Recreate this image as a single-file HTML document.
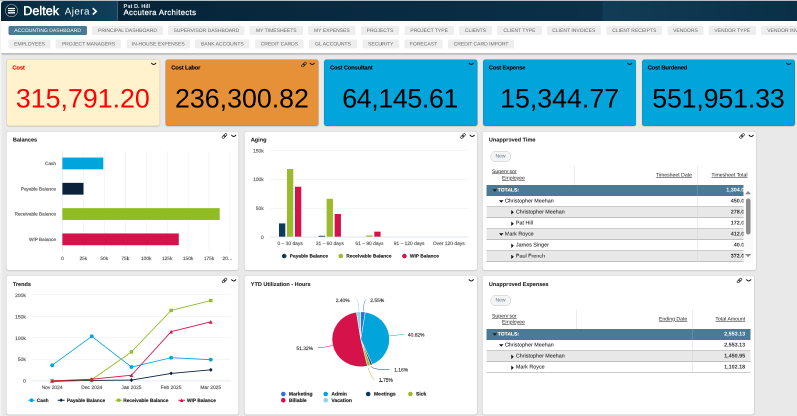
<!DOCTYPE html>
<html lang="en"><head><meta charset="utf-8"><title>Deltek Ajera - Accounting Dashboard</title>
<meta name="viewport" content="width=797, initial-scale=1">
<style>
html,body{margin:0;padding:0;background:#e9e9e9;}
body{width:797px;height:416px;overflow:hidden;position:relative;font-family:"Liberation Sans",Arial,sans-serif;}
#w{position:absolute;left:0;top:0;width:1594px;height:832px;transform:scale(.5);transform-origin:0 0;will-change:transform;background:#e9e9e9;overflow:hidden;}
#w *{box-sizing:border-box;}
#w{text-rendering:geometricPrecision;}
.abs{position:absolute;}
#hdr{position:absolute;left:2px;top:2px;width:1592px;height:40.4px;border-radius:6px 0 0 0;
 background:linear-gradient(90deg,#05263b 0,#10405a 232px,#3a5f76 232px,#3a5f76 233.6px,#062438 233.6px,#0b3048 1202px,#123c55 1204px,#0a2f47 1592px);}
#hdr .t{position:absolute;color:#fff;white-space:nowrap;line-height:1;}
#nav{position:absolute;left:2px;top:41.6px;width:1592px;height:64.4px;background:#fff;}
#navsh{position:absolute;left:2.6px;top:106px;width:1592px;height:5px;background:linear-gradient(#b9b9b9,#c6c6c6 60%,#e9e9e9);}
.nb{position:absolute;height:18px;border-radius:3px;background:#eee;color:#666;font-size:10px;line-height:19.4px;text-align:center;white-space:nowrap;overflow:hidden;}
.nb.on{background:#4b7a95;color:#fff;}
.kpi{position:absolute;top:119.4px;width:306.4px;height:132.2px;border-radius:5px;border:1px solid rgba(0,0,0,.13);box-shadow:0 1px 2px rgba(0,0,0,.2);}
.kpi .h{position:absolute;left:10.6px;top:8.5px;font-size:11.6px;letter-spacing:-.3px;font-weight:700;-webkit-text-stroke:.2px;line-height:14px;white-space:nowrap;}
.kpi .v{position:absolute;left:0;right:0;top:47.6px;text-align:center;font-size:53.5px;line-height:60px;white-space:nowrap;}
.pn{position:absolute;background:#fff;border:1px solid #cdcdcd;border-radius:6px;box-shadow:0 1px 2px rgba(0,0,0,.12);overflow:hidden;}
.pn .h{position:absolute;left:12.6px;top:10.6px;font-size:11.05px;font-weight:700;color:#2a2a2a;-webkit-text-stroke:.2px;line-height:14px;white-space:nowrap;}
svg{position:absolute;left:0;top:0;overflow:visible;}
svg text{font-family:"Liberation Sans",Arial,sans-serif;}
.ic{position:absolute;}
.newb{position:absolute;width:41px;height:22px;border-radius:11px;border:1px solid #c6c6c6;background:#f4f4f4;color:#4b7a95;font-size:10px;line-height:20px;text-align:center;}
.tb{position:absolute;font-size:10.8px;color:#333;}
.tb .r{position:absolute;left:0;right:0;height:22.1px;border-bottom:1.6px solid #979797;}
.tb .r.g{background:#e8e8e8;}
.tb .r.tot{background:#4b7a95;color:#fff;font-weight:700;border-bottom:none;}
.tb .r.tot .c{font-size:10px;}
.tb .c{position:absolute;top:0;line-height:21px;white-space:nowrap;-webkit-text-stroke:.2px;}
.tb .n{position:absolute;top:0;line-height:21px;white-space:nowrap;font-weight:700;text-align:right;}
.tb .hd{position:absolute;font-size:10.3px;text-decoration:underline;color:#222;white-space:nowrap;line-height:12px;}
.tb .vs{position:absolute;width:1px;background:#d9d9d9;}
.ar{position:absolute;width:0;height:0;}
</style></head>
<body>
<div id="w">
<div class="abs" style="left:0;top:0;width:2.6px;height:832px;background:#f3f3f3"></div><div class="abs" style="left:0;top:0;width:1594px;height:2px;background:#b8bfc4"></div>
<div id="hdr">
<svg width="240" height="39" viewBox="0 0 240 39"><circle cx="21" cy="19.2" r="12.2" fill="none" stroke="#b9c4cc" stroke-width="1.1"/><rect x="14" y="13.8" width="14" height="2.4" fill="#fff"/><rect x="14" y="17.9" width="14" height="2.4" fill="#fff"/><rect x="14" y="22" width="14" height="3.2" fill="#e3e7ea"/><path d="M183.5 14.4 L190.6 20.7 L183.5 27" fill="none" stroke="#fff" stroke-width="3.2"/></svg>
<div class="t" style="left:44.6px;top:7.6px;font-size:25px;font-weight:400;-webkit-text-stroke:.95px #fff;letter-spacing:.1px">Deltek</div>
<div class="t" style="left:118px;top:24px;font-size:6px;color:#c9d2d8">.</div>
<div class="t" style="left:127.5px;top:12.4px;font-size:19.6px;letter-spacing:.9px">Ajera</div>
<div class="t" style="left:245px;top:6px;font-size:11.4px;font-weight:700;color:#e4e9ed">Pat D. Hill</div>
<div class="t" style="left:245px;top:16px;font-size:15.5px;font-weight:400;-webkit-text-stroke:.45px #fff;letter-spacing:.68px">Accutera Architects</div>
</div>
<div id="nav"></div><div id="navsh"></div>
<div class="nb on" style="left:17px;top:52px;width:156.6px">ACCOUNTING DASHBOARD</div>
<div class="nb" style="left:184.2px;top:52px;width:141.6px">PRINCIPAL DASHBOARD</div>
<div class="nb" style="left:336.2px;top:52px;width:153.2px">SUPERVISOR DASHBOARD</div>
<div class="nb" style="left:499.4px;top:52px;width:106.4px">MY TIMESHEETS</div>
<div class="nb" style="left:616.4px;top:52px;width:94.8px">MY EXPENSES</div>
<div class="nb" style="left:721.8px;top:52px;width:76.2px">PROJECTS</div>
<div class="nb" style="left:808.6px;top:52px;width:99.4px">PROJECT TYPE</div>
<div class="nb" style="left:918.4px;top:52px;width:65.2px">CLIENTS</div>
<div class="nb" style="left:994.2px;top:52px;width:89.4px">CLIENT TYPE</div>
<div class="nb" style="left:1093.6px;top:52px;width:108px">CLIENT INVOICES</div>
<div class="nb" style="left:1213px;top:52px;width:111px">CLIENT RECEIPTS</div>
<div class="nb" style="left:1334.6px;top:52px;width:72.6px">VENDORS</div>
<div class="nb" style="left:1417.4px;top:52px;width:94.2px">VENDOR TYPE</div>
<div class="nb" style="left:1522.2px;top:52px;width:117.8px">VENDOR INVOICES</div>
<div class="nb" style="left:17px;top:78.6px;width:84.4px">EMPLOYEES</div>
<div class="nb" style="left:111.4px;top:78.6px;width:131px">PROJECT MANAGERS</div>
<div class="nb" style="left:253.2px;top:78.6px;width:126.8px">IN-HOUSE EXPENSES</div>
<div class="nb" style="left:390px;top:78.6px;width:109.4px">BANK ACCOUNTS</div>
<div class="nb" style="left:510.4px;top:78.6px;width:96.8px">CREDIT CARDS</div>
<div class="nb" style="left:618.4px;top:78.6px;width:95.2px">GL ACCOUNTS</div>
<div class="nb" style="left:724.8px;top:78.6px;width:73.2px">SECURITY</div>
<div class="nb" style="left:808.6px;top:78.6px;width:76.8px">FORECAST</div>
<div class="nb" style="left:896.4px;top:78.6px;width:131.4px">CREDIT CARD IMPORT</div>
<div class="kpi" style="left:13.2px;background:#fff2cc;color:#ff0000"><div class="h">Cost</div><div class="v" style="left:-1.4px">315,791.20</div>
<svg class="ic" style="left:287.4px;top:4.9px" width="11" height="6" viewBox="0 0 11 6"><path d="M1.2 1.3 Q5.4 6.9 9.6 1.3" fill="none" stroke="#111" stroke-width="2" stroke-linecap="round"/></svg>
</div>
<div class="kpi" style="left:330.8px;background:#e69138;color:#000"><div class="h">Cost Labor</div><div class="v">236,300.82</div>
<svg class="ic" style="left:269.4px;top:1.2px" width="14" height="14" viewBox="0 0 14 14"><g transform="rotate(-45 7 7)" fill="none" stroke="#222" stroke-width="1.3"><rect x="1.2" y="4.9" width="6.9" height="4.2" rx="2.1"/><rect x="5.9" y="4.9" width="6.9" height="4.2" rx="2.1"/></g></svg>
<svg class="ic" style="left:287.4px;top:4.9px" width="11" height="6" viewBox="0 0 11 6"><path d="M1.2 1.3 Q5.4 6.9 9.6 1.3" fill="none" stroke="#111" stroke-width="2" stroke-linecap="round"/></svg>
</div>
<div class="kpi" style="left:648.4px;background:#01a5db;color:#000"><div class="h">Cost Consultant</div><div class="v" style="letter-spacing:-.7px;left:-2.6px">64,145.61</div>
<svg class="ic" style="left:287.4px;top:4.9px" width="11" height="6" viewBox="0 0 11 6"><path d="M1.2 1.3 Q5.4 6.9 9.6 1.3" fill="none" stroke="#111" stroke-width="2" stroke-linecap="round"/></svg>
</div>
<div class="kpi" style="left:966px;background:#01a5db;color:#000"><div class="h">Cost Expense</div><div class="v">15,344.77</div>
<svg class="ic" style="left:287.4px;top:4.9px" width="11" height="6" viewBox="0 0 11 6"><path d="M1.2 1.3 Q5.4 6.9 9.6 1.3" fill="none" stroke="#111" stroke-width="2" stroke-linecap="round"/></svg>
</div>
<div class="kpi" style="left:1283.6px;background:#01a5db;color:#000"><div class="h">Cost Burdened</div><div class="v" style="letter-spacing:-.32px">551,951.33</div>
<svg class="ic" style="left:287.4px;top:4.9px" width="11" height="6" viewBox="0 0 11 6"><path d="M1.2 1.3 Q5.4 6.9 9.6 1.3" fill="none" stroke="#111" stroke-width="2" stroke-linecap="round"/></svg>
</div>
<div class="pn" style="left:12.1px;top:261.8px;width:466.4px;height:279.3px"><div class="h">Balances</div><svg class="ic" style="left:428.9px;top:2.2px" width="14" height="14" viewBox="0 0 14 14"><g transform="rotate(-45 7 7)" fill="none" stroke="#222" stroke-width="1.3"><rect x="1.2" y="4.9" width="6.9" height="4.2" rx="2.1"/><rect x="5.9" y="4.9" width="6.9" height="4.2" rx="2.1"/></g></svg><svg class="ic" style="left:449.2px;top:6.3px" width="11" height="6" viewBox="0 0 11 6"><path d="M1.2 1.3 Q5.4 6.9 9.6 1.3" fill="none" stroke="#111" stroke-width="2" stroke-linecap="round"/></svg><svg style="left:-13.1px;top:-262.8px" width="1594" height="832" viewBox="0 0 1594 832"><path d="M124.8 301.6 V504" stroke="#d3dbea" stroke-width="1"/><path d="M166.7 301.6 V504" stroke="#ebebeb" stroke-width="1"/><path d="M208.6 301.6 V504" stroke="#ebebeb" stroke-width="1"/><path d="M250.5 301.6 V504" stroke="#ebebeb" stroke-width="1"/><path d="M292.4 301.6 V504" stroke="#ebebeb" stroke-width="1"/><path d="M334.3 301.6 V504" stroke="#ebebeb" stroke-width="1"/><path d="M376.2 301.6 V504" stroke="#ebebeb" stroke-width="1"/><path d="M418.1 301.6 V504" stroke="#ebebeb" stroke-width="1"/><path d="M460 301.6 V504" stroke="#ebebeb" stroke-width="1"/><text x="124.8" y="519.5" font-size="9.6" fill="#555" stroke="#555" stroke-width=".3" text-anchor="middle" font-weight="400">0</text><text x="166.7" y="519.5" font-size="9.6" fill="#555" stroke="#555" stroke-width=".3" text-anchor="middle" font-weight="400">25k</text><text x="208.6" y="519.5" font-size="9.6" fill="#555" stroke="#555" stroke-width=".3" text-anchor="middle" font-weight="400">50k</text><text x="250.5" y="519.5" font-size="9.6" fill="#555" stroke="#555" stroke-width=".3" text-anchor="middle" font-weight="400">75k</text><text x="292.4" y="519.5" font-size="9.6" fill="#555" stroke="#555" stroke-width=".3" text-anchor="middle" font-weight="400">100k</text><text x="334.3" y="519.5" font-size="9.6" fill="#555" stroke="#555" stroke-width=".3" text-anchor="middle" font-weight="400">125k</text><text x="376.2" y="519.5" font-size="9.6" fill="#555" stroke="#555" stroke-width=".3" text-anchor="middle" font-weight="400">150k</text><text x="418.1" y="519.5" font-size="9.6" fill="#555" stroke="#555" stroke-width=".3" text-anchor="middle" font-weight="400">175k</text><text x="455" y="519.5" font-size="9.6" fill="#555" stroke="#555" stroke-width=".3" text-anchor="middle" font-weight="400">20…</text><rect x="124.8" y="315.1" width="81.79" height="23.6" fill="#01a5db"/><text x="112" y="330.2" font-size="9.4" fill="#555" stroke="#555" stroke-width=".3" text-anchor="end" font-weight="400">Cash</text><rect x="124.8" y="365.7" width="42.24" height="23.6" fill="#0c223a"/><text x="112" y="380.8" font-size="9.4" fill="#555" stroke="#555" stroke-width=".3" text-anchor="end" font-weight="400">Payable Balance</text><rect x="124.8" y="416.3" width="314.59" height="23.6" fill="#8fbc21"/><text x="112" y="431.4" font-size="9.4" fill="#555" stroke="#555" stroke-width=".3" text-anchor="end" font-weight="400">Receivable Balance</text><rect x="124.8" y="466.9" width="232.8" height="23.6" fill="#d5124a"/><text x="112" y="482" font-size="9.4" fill="#555" stroke="#555" stroke-width=".3" text-anchor="end" font-weight="400">WIP Balance</text></svg></div>
<div class="pn" style="left:488px;top:261.8px;width:467.2px;height:279.3px"><div class="h">Aging</div><svg class="ic" style="left:429.7px;top:2.2px" width="14" height="14" viewBox="0 0 14 14"><g transform="rotate(-45 7 7)" fill="none" stroke="#222" stroke-width="1.3"><rect x="1.2" y="4.9" width="6.9" height="4.2" rx="2.1"/><rect x="5.9" y="4.9" width="6.9" height="4.2" rx="2.1"/></g></svg><svg class="ic" style="left:450px;top:6.3px" width="11" height="6" viewBox="0 0 11 6"><path d="M1.2 1.3 Q5.4 6.9 9.6 1.3" fill="none" stroke="#111" stroke-width="2" stroke-linecap="round"/></svg><svg style="left:-489px;top:-262.8px" width="1594" height="832" viewBox="0 0 1594 832"><text x="527.4" y="477.5" font-size="9.8" fill="#555" stroke="#555" stroke-width=".3" text-anchor="end" font-weight="400">0</text><path d="M540.6 416.4 H937.2" stroke="#ebebeb" stroke-width="1"/><text x="527.4" y="419.9" font-size="9.8" fill="#555" stroke="#555" stroke-width=".3" text-anchor="end" font-weight="400">50k</text><path d="M540.6 358.8 H937.2" stroke="#ebebeb" stroke-width="1"/><text x="527.4" y="362.3" font-size="9.8" fill="#555" stroke="#555" stroke-width=".3" text-anchor="end" font-weight="400">100k</text><path d="M540.6 301.2 H937.2" stroke="#ebebeb" stroke-width="1"/><text x="527.4" y="304.7" font-size="9.8" fill="#555" stroke="#555" stroke-width=".3" text-anchor="end" font-weight="400">150k</text><text x="580.26" y="489.5" font-size="9.8" fill="#555" stroke="#555" stroke-width=".3" text-anchor="middle" font-weight="400">0 – 30 days</text><rect x="557.96" y="446.81" width="12.6" height="27.19" fill="#0e3a5e"/><rect x="573.96" y="338.06" width="12.6" height="135.94" fill="#9bbb2c"/><rect x="589.96" y="373.43" width="12.6" height="100.57" fill="#d5124a"/><text x="659.58" y="489.5" font-size="9.8" fill="#555" stroke="#555" stroke-width=".3" text-anchor="middle" font-weight="400">31 – 60 days</text><rect x="637.28" y="471.58" width="12.6" height="2.42" fill="#0e3a5e"/><rect x="653.28" y="397.51" width="12.6" height="76.49" fill="#9bbb2c"/><rect x="669.28" y="427.92" width="12.6" height="46.08" fill="#d5124a"/><text x="738.9" y="489.5" font-size="9.8" fill="#555" stroke="#555" stroke-width=".3" text-anchor="middle" font-weight="400">61 – 90 days</text><rect x="732.6" y="470.89" width="12.6" height="3.11" fill="#9bbb2c"/><rect x="748.6" y="463.29" width="12.6" height="10.71" fill="#d5124a"/><text x="818.22" y="489.5" font-size="9.8" fill="#555" stroke="#555" stroke-width=".3" text-anchor="middle" font-weight="400">91 – 120 days</text><text x="897.54" y="489.5" font-size="9.8" fill="#555" stroke="#555" stroke-width=".3" text-anchor="middle" font-weight="400">Over 120 days</text><path d="M540.6 474 H937.2" stroke="#d3dbea" stroke-width="1.3"/><circle cx="568.4" cy="512" r="4.6" fill="#0e3a5e"/><text x="579.6" y="515.4" font-size="9.7" fill="#262626" stroke="#262626" stroke-width=".3" text-anchor="start" font-weight="700">Payable Balance</text><circle cx="681.6" cy="512" r="4.6" fill="#9bbb2c"/><text x="692.6" y="515.4" font-size="9.7" fill="#262626" stroke="#262626" stroke-width=".3" text-anchor="start" font-weight="700">Receivable Balance</text><circle cx="808.8" cy="512" r="4.6" fill="#d5124a"/><text x="819.8" y="515.4" font-size="9.7" fill="#262626" stroke="#262626" stroke-width=".3" text-anchor="start" font-weight="700">WIP Balance</text></svg></div>
<div class="pn" style="left:964.2px;top:261.8px;width:549px;height:279.3px"><div class="h">Unapproved Time</div><svg class="ic" style="left:511.5px;top:2.2px" width="14" height="14" viewBox="0 0 14 14"><g transform="rotate(-45 7 7)" fill="none" stroke="#222" stroke-width="1.3"><rect x="1.2" y="4.9" width="6.9" height="4.2" rx="2.1"/><rect x="5.9" y="4.9" width="6.9" height="4.2" rx="2.1"/></g></svg><svg class="ic" style="left:531.8px;top:6.3px" width="11" height="6" viewBox="0 0 11 6"><path d="M1.2 1.3 Q5.4 6.9 9.6 1.3" fill="none" stroke="#111" stroke-width="2" stroke-linecap="round"/></svg><div class="newb" style="left:15.4px;top:38.8px">New</div><div class="tb" style="left:8.2px;top:0;width:513.4px;height:600px;"><div class="hd" style="left:10.6px;top:75.6px">Supervisor</div><div class="hd" style="left:30.6px;top:88px">Employee</div><div class="hd" style="right:102.8px;top:81.8px">Timesheet Date</div><div class="hd" style="right:-8.2px;top:81.8px">Timesheet Total</div><div class="vs" style="left:175.6px;top:68.2px;height:38.8px"></div><div class="vs" style="left:421.6px;top:68.2px;height:193.5px"></div><div class="r tot" style="top:107px"><svg class="ic" style="left:11.3px;top:8px" width="9" height="6" viewBox="0 0 9 6"><path d="M0 0.5 H9 L4.5 5.5 Z" fill="#0b1f2b"/></svg><div class="c" style="left:22.2px">TOTALS:</div><div class="n" style="right:-7.8px">1,304.00</div><div class="vs" style="left:421.6px;top:0;height:22px;background:#7d9fb3"></div></div><div class="r " style="top:129.1px"><svg class="ic" style="left:24.9px;top:8px" width="9" height="6" viewBox="0 0 9 6"><path d="M0 0.5 H9 L4.5 5.5 Z" fill="#111"/></svg><div class="c" style="left:36.4px">Christopher Meehan</div><div class="n" style="right:-7.8px">450.00</div><div class="vs" style="left:421.6px;top:0;height:22px;background:#d4d4d4"></div></div><div class="r g" style="top:151.2px"><svg class="ic" style="left:48.8px;top:6.5px" width="6" height="9" viewBox="0 0 6 9"><path d="M0.5 0 V9 L5.5 4.5 Z" fill="#111"/></svg><div class="c" style="left:58.4px">Christopher Meehan</div><div class="n" style="right:-7.8px">278.00</div><div class="vs" style="left:421.6px;top:0;height:22px;background:#d4d4d4"></div></div><div class="r " style="top:173.3px"><svg class="ic" style="left:48.8px;top:6.5px" width="6" height="9" viewBox="0 0 6 9"><path d="M0.5 0 V9 L5.5 4.5 Z" fill="#111"/></svg><div class="c" style="left:58.4px">Pat Hill</div><div class="n" style="right:-7.8px">172.00</div><div class="vs" style="left:421.6px;top:0;height:22px;background:#d4d4d4"></div></div><div class="r g" style="top:195.4px"><svg class="ic" style="left:24.9px;top:8px" width="9" height="6" viewBox="0 0 9 6"><path d="M0 0.5 H9 L4.5 5.5 Z" fill="#111"/></svg><div class="c" style="left:36.4px">Mark Royce</div><div class="n" style="right:-7.8px">412.00</div><div class="vs" style="left:421.6px;top:0;height:22px;background:#d4d4d4"></div></div><div class="r " style="top:217.5px"><svg class="ic" style="left:48.8px;top:6.5px" width="6" height="9" viewBox="0 0 6 9"><path d="M0.5 0 V9 L5.5 4.5 Z" fill="#111"/></svg><div class="c" style="left:58.4px">James Singer</div><div class="n" style="right:-7.8px">40.00</div><div class="vs" style="left:421.6px;top:0;height:22px;background:#d4d4d4"></div></div><div class="r g" style="top:239.6px"><svg class="ic" style="left:48.8px;top:6.5px" width="6" height="9" viewBox="0 0 6 9"><path d="M0.5 0 V9 L5.5 4.5 Z" fill="#111"/></svg><div class="c" style="left:58.4px">Paul French</div><div class="n" style="right:-7.8px">372.00</div><div class="vs" style="left:421.6px;top:0;height:22px;background:#d4d4d4"></div></div></div><div class="abs" style="left:521.6px;top:107px;width:19px;height:156.7px;background:#fafafa"></div><svg class="ic" style="left:524.8px;top:118.8px" width="12.4" height="6.4" viewBox="0 0 11 6"><path d="M0 6 H11 L5.5 0 Z" fill="#8a8a8a"/></svg><div class="abs" style="left:526.6px;top:134px;width:9.6px;height:72px;background:#8c8c8c;border-radius:4.8px"></div><svg class="ic" style="left:524.8px;top:245.4px" width="12.4" height="6.4" viewBox="0 0 11 6"><path d="M0 0 H11 L5.5 6 Z" fill="#8a8a8a"/></svg></div>
<div class="pn" style="left:12.1px;top:550.4px;width:466.4px;height:279.2px"><div class="h">Trends</div><svg class="ic" style="left:428.9px;top:2.2px" width="14" height="14" viewBox="0 0 14 14"><g transform="rotate(-45 7 7)" fill="none" stroke="#222" stroke-width="1.3"><rect x="1.2" y="4.9" width="6.9" height="4.2" rx="2.1"/><rect x="5.9" y="4.9" width="6.9" height="4.2" rx="2.1"/></g></svg><svg class="ic" style="left:449.2px;top:6.3px" width="11" height="6" viewBox="0 0 11 6"><path d="M1.2 1.3 Q5.4 6.9 9.6 1.3" fill="none" stroke="#111" stroke-width="2" stroke-linecap="round"/></svg><svg style="left:-13.1px;top:-551.4px" width="1594" height="832" viewBox="0 0 1594 832"><text x="51.6" y="765.3" font-size="9.8" fill="#555" stroke="#555" stroke-width=".3" text-anchor="end" font-weight="400">0</text><path d="M64.6 718.7 H461.2" stroke="#ebebeb" stroke-width="1"/><text x="51.6" y="722.45" font-size="9.8" fill="#555" stroke="#555" stroke-width=".3" text-anchor="end" font-weight="400">50k</text><path d="M64.6 675.6 H461.2" stroke="#ebebeb" stroke-width="1"/><text x="51.6" y="679.6" font-size="9.8" fill="#555" stroke="#555" stroke-width=".3" text-anchor="end" font-weight="400">100k</text><path d="M64.6 632.5 H461.2" stroke="#ebebeb" stroke-width="1"/><text x="51.6" y="636.75" font-size="9.8" fill="#555" stroke="#555" stroke-width=".3" text-anchor="end" font-weight="400">150k</text><path d="M64.6 589.4 H461.2" stroke="#ebebeb" stroke-width="1"/><text x="51.6" y="593.9" font-size="9.8" fill="#555" stroke="#555" stroke-width=".3" text-anchor="end" font-weight="400">200k</text><path d="M64.6 761.8 H461.2" stroke="#d3dbea" stroke-width="1.1"/><text x="104.26" y="777.5" font-size="9.8" fill="#555" stroke="#555" stroke-width=".3" text-anchor="middle" font-weight="400">Nov 2024</text><text x="183.58" y="777.5" font-size="9.8" fill="#555" stroke="#555" stroke-width=".3" text-anchor="middle" font-weight="400">Dec 2024</text><text x="262.9" y="777.5" font-size="9.8" fill="#555" stroke="#555" stroke-width=".3" text-anchor="middle" font-weight="400">Jan 2025</text><text x="342.22" y="777.5" font-size="9.8" fill="#555" stroke="#555" stroke-width=".3" text-anchor="middle" font-weight="400">Feb 2025</text><text x="421.54" y="777.5" font-size="9.8" fill="#555" stroke="#555" stroke-width=".3" text-anchor="middle" font-weight="400">Mar 2025</text><path d="M104.26 730.63 L183.58 672.61 L262.9 734.09 L342.22 715.47 L421.54 719.37" fill="none" stroke="#01a5db" stroke-width="1.7" stroke-linejoin="round"/><circle cx="104.26" cy="730.63" r="3.8" fill="#01a5db"/><circle cx="183.58" cy="672.61" r="3.8" fill="#01a5db"/><circle cx="262.9" cy="734.09" r="3.8" fill="#01a5db"/><circle cx="342.22" cy="715.47" r="3.8" fill="#01a5db"/><circle cx="421.54" cy="719.37" r="3.8" fill="#01a5db"/><path d="M104.26 761.8 L183.58 760.93 L262.9 760.07 L342.22 746.82 L421.54 739.63" fill="none" stroke="#0c2340" stroke-width="1.7" stroke-linejoin="round"/><path d="M104.26 758 L108.06 761.8 L104.26 765.6 L100.46 761.8 Z" fill="#0c2340"/><path d="M183.58 757.13 L187.38 760.93 L183.58 764.73 L179.78 760.93 Z" fill="#0c2340"/><path d="M262.9 756.27 L266.7 760.07 L262.9 763.87 L259.1 760.07 Z" fill="#0c2340"/><path d="M342.22 743.02 L346.02 746.82 L342.22 750.62 L338.42 746.82 Z" fill="#0c2340"/><path d="M421.54 735.83 L425.34 739.63 L421.54 743.43 L417.74 739.63 Z" fill="#0c2340"/><path d="M104.26 761.37 L183.58 759.2 L262.9 703.78 L342.22 620.91 L421.54 601.16" fill="none" stroke="#8fbc21" stroke-width="1.7" stroke-linejoin="round"/><rect x="100.86" y="757.97" width="6.8" height="6.8" fill="#8fbc21"/><rect x="180.18" y="755.8" width="6.8" height="6.8" fill="#8fbc21"/><rect x="259.5" y="700.38" width="6.8" height="6.8" fill="#8fbc21"/><rect x="338.82" y="617.51" width="6.8" height="6.8" fill="#8fbc21"/><rect x="418.14" y="597.76" width="6.8" height="6.8" fill="#8fbc21"/><path d="M104.26 761.8 L183.58 758.34 L262.9 750.54 L342.22 663.43 L421.54 643.68" fill="none" stroke="#d5124a" stroke-width="1.7" stroke-linejoin="round"/><path d="M104.26 758 L108.06 765.6 L100.46 765.6 Z" fill="#d5124a"/><path d="M183.58 754.54 L187.38 762.14 L179.78 762.14 Z" fill="#d5124a"/><path d="M262.9 746.74 L266.7 754.34 L259.1 754.34 Z" fill="#d5124a"/><path d="M342.22 659.63 L346.02 667.23 L338.42 667.23 Z" fill="#d5124a"/><path d="M421.54 639.88 L425.34 647.48 L417.74 647.48 Z" fill="#d5124a"/><path d="M56.6 800.4 H69.6" stroke="#01a5db" stroke-width="2"/><circle cx="63.1" cy="800.4" r="3.6" fill="#01a5db"/><text x="73.6" y="803.8" font-size="9.7" fill="#262626" stroke="#262626" stroke-width=".3" text-anchor="start" font-weight="700">Cash</text><path d="M115.4 800.4 H129.2" stroke="#0c2340" stroke-width="2"/><path d="M122.3 796.8 L125.9 800.4 L122.3 804 L118.7 800.4 Z" fill="#0c2340"/><text x="133.8" y="803.8" font-size="9.7" fill="#262626" stroke="#262626" stroke-width=".3" text-anchor="start" font-weight="700">Payable Balance</text><path d="M230.8 800.4 H244" stroke="#8fbc21" stroke-width="2"/><rect x="234.2" y="797.2" width="6.4" height="6.4" fill="#8fbc21"/><text x="246.4" y="803.8" font-size="9.7" fill="#262626" stroke="#262626" stroke-width=".3" text-anchor="start" font-weight="700">Receivable Balance</text><path d="M356.6 800.4 H370" stroke="#d5124a" stroke-width="2"/><path d="M363.3 796.8 L366.9 804 L359.7 804 Z" fill="#d5124a"/><text x="373.8" y="803.8" font-size="9.7" fill="#262626" stroke="#262626" stroke-width=".3" text-anchor="start" font-weight="700">WIP Balance</text></svg></div>
<div class="pn" style="left:488px;top:550.4px;width:467.2px;height:279.2px"><div class="h">YTD Utilization - Hours</div><svg class="ic" style="left:448.4px;top:6.3px" width="11" height="6" viewBox="0 0 11 6"><path d="M1.2 1.3 Q5.4 6.9 9.6 1.3" fill="none" stroke="#111" stroke-width="2" stroke-linecap="round"/></svg><svg style="left:-489px;top:-551.4px" width="1594" height="832" viewBox="0 0 1594 832"><path d="M721.5 678.6 L721.5 623.6 A57.5 55 0 0 1 730.67 624.3 Z" fill="#2b73e0" stroke="#fff" stroke-width="1" stroke-linejoin="round"/><path d="M721.5 678.6 L730.67 624.3 A57.5 55 0 0 1 744.77 728.9 Z" fill="#01a5db" stroke="#fff" stroke-width="1" stroke-linejoin="round"/><path d="M721.5 678.6 L744.77 728.9 A57.5 55 0 0 1 740.88 730.38 Z" fill="#0e3a5e" stroke="#fff" stroke-width="1" stroke-linejoin="round"/><path d="M721.5 678.6 L740.88 730.38 A57.5 55 0 0 1 734.82 732.1 Z" fill="#9bbb2c" stroke="#fff" stroke-width="1" stroke-linejoin="round"/><path d="M721.5 678.6 L734.82 732.1 A57.5 55 0 1 1 712.86 624.22 Z" fill="#d5124a" stroke="#fff" stroke-width="1" stroke-linejoin="round"/><path d="M721.5 678.6 L712.86 624.22 A57.5 55 0 0 1 721.5 623.6 Z" fill="#8ed4e8" stroke="#fff" stroke-width="1" stroke-linejoin="round"/><path d="M733 599.6 C729 599.6 727.2 608 726.6 622.4" fill="none" stroke="#2b73e0" stroke-width="1"/><path d="M712.4 599.6 C716 599.6 717.2 608 718 622.4" fill="none" stroke="#8ed4e8" stroke-width="1"/><path d="M808 669.2 C798 669.2 790 670.8 778.4 672" fill="none" stroke="#01a5db" stroke-width="1"/><path d="M636 695.6 C646 695.6 654 693.2 665.6 690.8" fill="none" stroke="#d5124a" stroke-width="1"/><path d="M779 739.2 C746 739.2 747 736 741.2 732.8" fill="none" stroke="#0e3a5e" stroke-width="1"/><path d="M749 758.8 C744 758.8 739 744 736 735.2" fill="none" stroke="#9bbb2c" stroke-width="1"/><text x="740.6" y="603.9" font-size="9.8" fill="#333" stroke="#333" stroke-width=".3" text-anchor="start" font-weight="400">2.55%</text><text x="699.2" y="603.9" font-size="9.8" fill="#333" stroke="#333" stroke-width=".3" text-anchor="end" font-weight="400">2.40%</text><text x="815.8" y="672.9" font-size="9.8" fill="#333" stroke="#333" stroke-width=".3" text-anchor="start" font-weight="400">40.82%</text><text x="626" y="699.9" font-size="9.8" fill="#333" stroke="#333" stroke-width=".3" text-anchor="end" font-weight="400">51.32%</text><text x="788.4" y="743.3" font-size="9.8" fill="#333" stroke="#333" stroke-width=".3" text-anchor="start" font-weight="400">1.16%</text><text x="758" y="762.9" font-size="9.8" fill="#333" stroke="#333" stroke-width=".3" text-anchor="start" font-weight="400">1.75%</text><circle cx="566.6" cy="788" r="4.6" fill="#2b73e0"/><text x="577.8" y="791.4" font-size="10" fill="#262626" stroke="#262626" stroke-width=".3" text-anchor="start" font-weight="700">Marketing</text><circle cx="651.4" cy="788" r="4.6" fill="#01a5db"/><text x="662.8" y="791.4" font-size="10" fill="#262626" stroke="#262626" stroke-width=".3" text-anchor="start" font-weight="700">Admin</text><circle cx="736.4" cy="788" r="4.6" fill="#0e3a5e"/><text x="748" y="791.4" font-size="10" fill="#262626" stroke="#262626" stroke-width=".3" text-anchor="start" font-weight="700">Meetings</text><circle cx="820.8" cy="788" r="4.6" fill="#9bbb2c"/><text x="832" y="791.4" font-size="10" fill="#262626" stroke="#262626" stroke-width=".3" text-anchor="start" font-weight="700">Sick</text><circle cx="566.6" cy="800.4" r="4.6" fill="#d5124a"/><text x="577.8" y="803.8" font-size="10" fill="#262626" stroke="#262626" stroke-width=".3" text-anchor="start" font-weight="700">Billable</text><circle cx="651.4" cy="800.4" r="4.6" fill="#8ed4e8"/><text x="662.8" y="803.8" font-size="10" fill="#262626" stroke="#262626" stroke-width=".3" text-anchor="start" font-weight="700">Vacation</text></svg></div>
<div class="pn" style="left:964.2px;top:550.4px;width:544.4px;height:279.2px"><div class="h">Unapproved Expenses</div><svg class="ic" style="left:506.9px;top:2.2px" width="14" height="14" viewBox="0 0 14 14"><g transform="rotate(-45 7 7)" fill="none" stroke="#222" stroke-width="1.3"><rect x="1.2" y="4.9" width="6.9" height="4.2" rx="2.1"/><rect x="5.9" y="4.9" width="6.9" height="4.2" rx="2.1"/></g></svg><svg class="ic" style="left:527.2px;top:6.3px" width="11" height="6" viewBox="0 0 11 6"><path d="M1.2 1.3 Q5.4 6.9 9.6 1.3" fill="none" stroke="#111" stroke-width="2" stroke-linecap="round"/></svg><div class="newb" style="left:15.4px;top:38.4px">New</div><div class="tb" style="left:8.2px;top:0;width:527.8px;height:600px;"><div class="hd" style="left:10.6px;top:75.2px">Supervisor</div><div class="hd" style="left:30.6px;top:87.6px">Employee</div><div class="hd" style="right:126.6px;top:81.4px">Ending Date</div><div class="hd" style="right:10.8px;top:81.4px">Total Amount</div><div class="vs" style="left:179.6px;top:67.8px;height:38.8px"></div><div class="vs" style="left:411.6px;top:67.8px;height:127.2px"></div><div class="r tot" style="top:106.6px"><svg class="ic" style="left:11.3px;top:8px" width="9" height="6" viewBox="0 0 9 6"><path d="M0 0.5 H9 L4.5 5.5 Z" fill="#0b1f2b"/></svg><div class="c" style="left:22.2px">TOTALS:</div><div class="n" style="right:10.8px">2,553.13</div><div class="vs" style="left:411.6px;top:0;height:22px;background:#7d9fb3"></div></div><div class="r " style="top:128.7px"><svg class="ic" style="left:24.9px;top:8px" width="9" height="6" viewBox="0 0 9 6"><path d="M0 0.5 H9 L4.5 5.5 Z" fill="#111"/></svg><div class="c" style="left:36.4px">Christopher Meehan</div><div class="n" style="right:10.8px">2,553.13</div><div class="vs" style="left:411.6px;top:0;height:22px;background:#d4d4d4"></div></div><div class="r g" style="top:150.8px"><svg class="ic" style="left:48.8px;top:6.5px" width="6" height="9" viewBox="0 0 6 9"><path d="M0.5 0 V9 L5.5 4.5 Z" fill="#111"/></svg><div class="c" style="left:58.4px">Christopher Meehan</div><div class="n" style="right:10.8px">1,450.95</div><div class="vs" style="left:411.6px;top:0;height:22px;background:#d4d4d4"></div></div><div class="r " style="top:172.9px"><svg class="ic" style="left:48.8px;top:6.5px" width="6" height="9" viewBox="0 0 6 9"><path d="M0.5 0 V9 L5.5 4.5 Z" fill="#111"/></svg><div class="c" style="left:58.4px">Mark Royce</div><div class="n" style="right:10.8px">1,102.18</div><div class="vs" style="left:411.6px;top:0;height:22px;background:#d4d4d4"></div></div></div></div>
</div>
</body></html>
